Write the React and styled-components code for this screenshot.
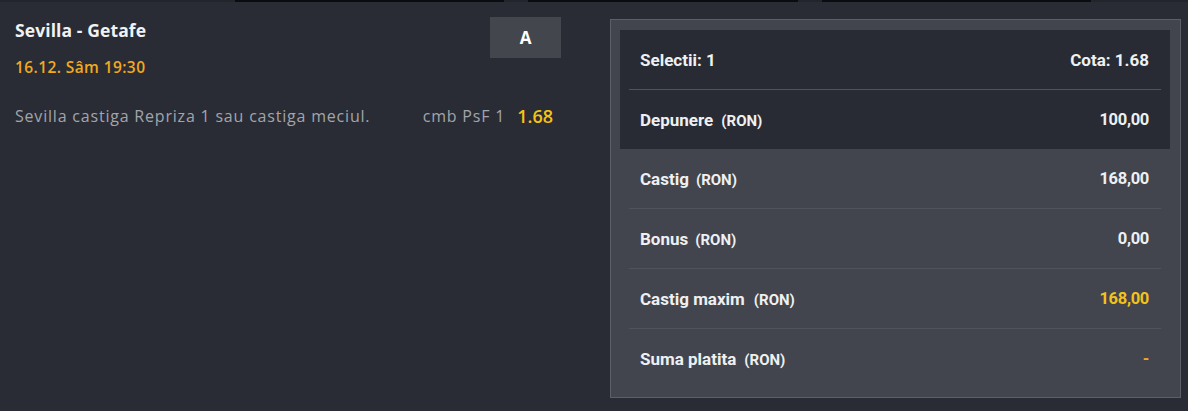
import React from "react";
import styled, { createGlobalStyle } from "styled-components";

const GlobalStyle = createGlobalStyle`
  html, body {
    margin: 0;
    padding: 0;
    background-color: #292c34;
  }
  body {
    font-family: "Open Sans", "Liberation Sans", sans-serif;
  }
`;

const Page = styled.div`
  width: 1188px;
  height: 411px;
  background-color: #292c34;
  display: flex;
  flex-direction: column;
  overflow: hidden;
`;

const TopStrip = styled.div`
  height: 2px;
  display: flex;
  background-color: #22252b;
`;

const StripSegment = styled.div`
  width: ${props => props.$w}px;
  background-color: ${props => (props.$dark ? "#0b0c0f" : "transparent")};
`;

const Content = styled.div`
  display: flex;
  flex-direction: row;
  align-items: flex-start;
  gap: 49px;
`;

/* left side: the event */
const EventCol = styled.div`
  width: 546px;
  padding: 15px 0 0 15px;
  display: flex;
  flex-direction: column;
`;

const EventHeader = styled.div`
  display: flex;
  justify-content: space-between;
  align-items: flex-start;
`;

const EventInfo = styled.div`
  display: flex;
  flex-direction: column;
  padding-top: 3px;
`;

const Title = styled.div`
  font-size: 17.5px;
  line-height: 20px;
  font-weight: 700;
  letter-spacing: 0.1px;
  color: #f1f2f4;
`;

const DateText = styled.div`
  margin-top: 18px;
  font-size: 15.5px;
  line-height: 18px;
  font-weight: 600;
  letter-spacing: 0.4px;
  color: #f2a91e;
`;

const OutcomeButton = styled.div`
  width: 71px;
  height: 41px;
  background-color: #43464d;
  color: #ffffff;
  font-size: 17px;
  font-weight: 700;
  display: flex;
  align-items: center;
  justify-content: center;
`;

const SelectionRow = styled.div`
  margin-top: 28px;
  display: flex;
  justify-content: space-between;
  align-items: center;
  padding-right: 8px;
`;

const Description = styled.div`
  font-size: 16px;
  line-height: 18px;
  letter-spacing: 0.8px;
  color: #a2a5ac;
`;

const MarketBox = styled.div`
  display: flex;
  align-items: center;
  gap: 12px;
`;

const Market = styled.span`
  font-size: 16px;
  letter-spacing: 0.8px;
  color: #a2a5ac;
`;

const Odd = styled.span`
  font-size: 18px;
  font-weight: 600;
  color: #f3c414;
`;

/* right side: the ticket */
const Ticket = styled.div`
  margin-top: 17px;
  width: 550px;
  border: 1px solid #5c5f66;
  background-color: #42454d;
  padding: 10px 10px 9px 9px;
  display: flex;
  flex-direction: column;
  font-family: Roboto, "Liberation Sans", sans-serif;
`;

const DarkBlock = styled.div`
  background-color: #282b33;
  display: flex;
  flex-direction: column;
`;

const Row = styled.div`
  height: 59px;
  margin: 0 9px;
  padding: 0 12px 0 11px;
  display: flex;
  justify-content: space-between;
  align-items: center;
  border-top: ${props => (props.$first ? "none" : "1px solid #50535b")};
`;

const Label = styled.div`
  font-size: 17px;
  font-weight: 700;
  color: #eef0f2;
  display: flex;
  align-items: baseline;
`;

const Unit = styled.span`
  font-size: 15px;
  margin-left: ${props => props.$gap || 8}px;
`;

const Value = styled.div`
  font-size: 16.5px;
  font-weight: 700;
  letter-spacing: -0.3px;
  color: ${props => props.$color || "#eef0f2"};
`;

const strip = [
  { w: 235, dark: false },
  { w: 269, dark: true },
  { w: 24, dark: false },
  { w: 270, dark: true },
  { w: 24, dark: false },
  { w: 269, dark: true },
  { w: 97, dark: false },
];

const rows = [
  { label: "Castig", value: "168,00", gap: 7 },
  { label: "Bonus", value: "0,00", gap: 7 },
  { label: "Castig maxim", value: "168,00", color: "#f3c21c", gap: 9 },
  { label: "Suma platita", value: "-", color: "#f2a91e", gap: 8 },
];

export default function App() {
  return (
    <Page>
      <GlobalStyle />
      <TopStrip>
        {strip.map((s, i) => (
          <StripSegment key={i} $w={s.w} $dark={s.dark} />
        ))}
      </TopStrip>
      <Content>
        <EventCol>
          <EventHeader>
            <EventInfo>
              <Title>Sevilla - Getafe</Title>
              <DateText>16.12. Sâm 19:30</DateText>
            </EventInfo>
            <OutcomeButton>A</OutcomeButton>
          </EventHeader>
          <SelectionRow>
            <Description>Sevilla castiga Repriza 1 sau castiga meciul.</Description>
            <MarketBox>
              <Market>cmb PsF 1</Market>
              <Odd>1.68</Odd>
            </MarketBox>
          </SelectionRow>
        </EventCol>
        <Ticket>
          <DarkBlock>
            <Row $first>
              <Label>Selectii: 1</Label>
              <Label>Cota: 1.68</Label>
            </Row>
            <Row>
              <Label>
                Depunere<Unit $gap={8}>(RON)</Unit>
              </Label>
              <Value>100,00</Value>
            </Row>
          </DarkBlock>
          {rows.map((r, i) => (
            <Row key={r.label} $first={i === 0}>
              <Label>
                {r.label}
                <Unit $gap={r.gap}>(RON)</Unit>
              </Label>
              <Value $color={r.color}>{r.value}</Value>
            </Row>
          ))}
        </Ticket>
      </Content>
    </Page>
  );
}
